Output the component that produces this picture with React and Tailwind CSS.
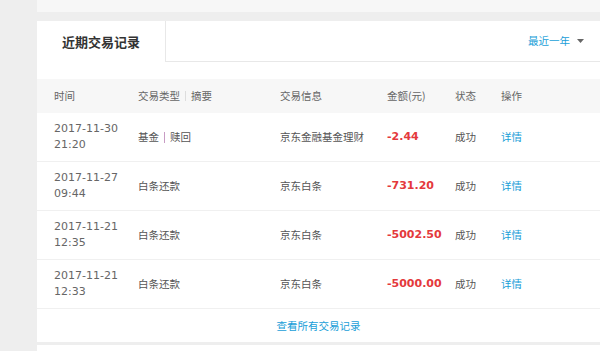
import React from "react";

const rows = [
  { date: "2017-11-30", time: "21:20", type: ["基金", "赎回"], info: "京东金融基金理财", amount: "-2.44" },
  { date: "2017-11-27", time: "09:44", type: ["白条还款"], info: "京东白条", amount: "-731.20" },
  { date: "2017-11-21", time: "12:35", type: ["白条还款"], info: "京东白条", amount: "-5002.50" },
  { date: "2017-11-21", time: "12:33", type: ["白条还款"], info: "京东白条", amount: "-5000.00" },
];

const grid = "grid grid-cols-[84px_142px_107px_68px_46px_1fr] items-center pl-[17px]";
const cjk = "font-['Noto_Sans_CJK_SC',sans-serif] text-[10.5px]";

const App = () => {
  return (
    <div className="min-h-screen bg-[#eeeeee] pl-[37px] font-['DejaVu_Sans','Noto_Sans_CJK_SC',sans-serif] text-[#666]">
      <div className="h-[12px] bg-[#f7f7f7]" />
      <div className="mt-[9px] bg-white">
        <div className="flex h-[41px]">
          <div className="flex w-[129px] items-center justify-center border-r border-[#e8e8e8] font-['Noto_Sans_CJK_SC',sans-serif] text-[13px] font-bold text-[#333]">
            近期交易记录
          </div>
          <div className="flex flex-1 items-center justify-end border-b border-[#e8e8e8] pr-[16px]">
            <span className={`${cjk} text-[#199ed8]`}>最近一年</span>
            <svg width="7" height="4" viewBox="0 0 7 4" className="ml-[7px]">
              <path d="M0 0h7L3.5 4z" fill="#666" />
            </svg>
          </div>
        </div>

        <div className={`${grid} mt-[17px] h-[34px] bg-[#f7f7f7] ${cjk}`}>
          <span>时间</span>
          <span className="flex items-center">
            交易类型<span className="mx-[5px] h-[10px] w-px bg-[#ddd]" />摘要
          </span>
          <span>交易信息</span>
          <span>金额(元)</span>
          <span>状态</span>
          <span>操作</span>
        </div>

        {rows.map((r, i) => (
          <div key={i} className={`${grid} h-[49px] border-b border-[#f0f0f0]`}>
            <div className="text-[11px] leading-[16px]">
              <div>{r.date}</div>
              <div>{r.time}</div>
            </div>
            <div className={`flex items-center ${cjk} text-[#555]`}>
              {r.type[0]}
              {r.type[1] && (
                <>
                  <span className="mx-[5px] h-[11px] w-px bg-[#c89cc4]" />
                  {r.type[1]}
                </>
              )}
            </div>
            <div className={`${cjk} text-[#555]`}>{r.info}</div>
            <div className="text-[11px] font-bold text-[#e4393c]">{r.amount}</div>
            <div className={`${cjk} text-[#555]`}>成功</div>
            <div className={`${cjk} text-[#199ed8]`}>详情</div>
          </div>
        ))}

        <div className={`flex h-[33px] items-center justify-center ${cjk} text-[#199ed8]`}>
          查看所有交易记录
        </div>
      </div>
      <div className="mt-[3px] h-[20px] bg-white" />
    </div>
  );
};

export default App;
